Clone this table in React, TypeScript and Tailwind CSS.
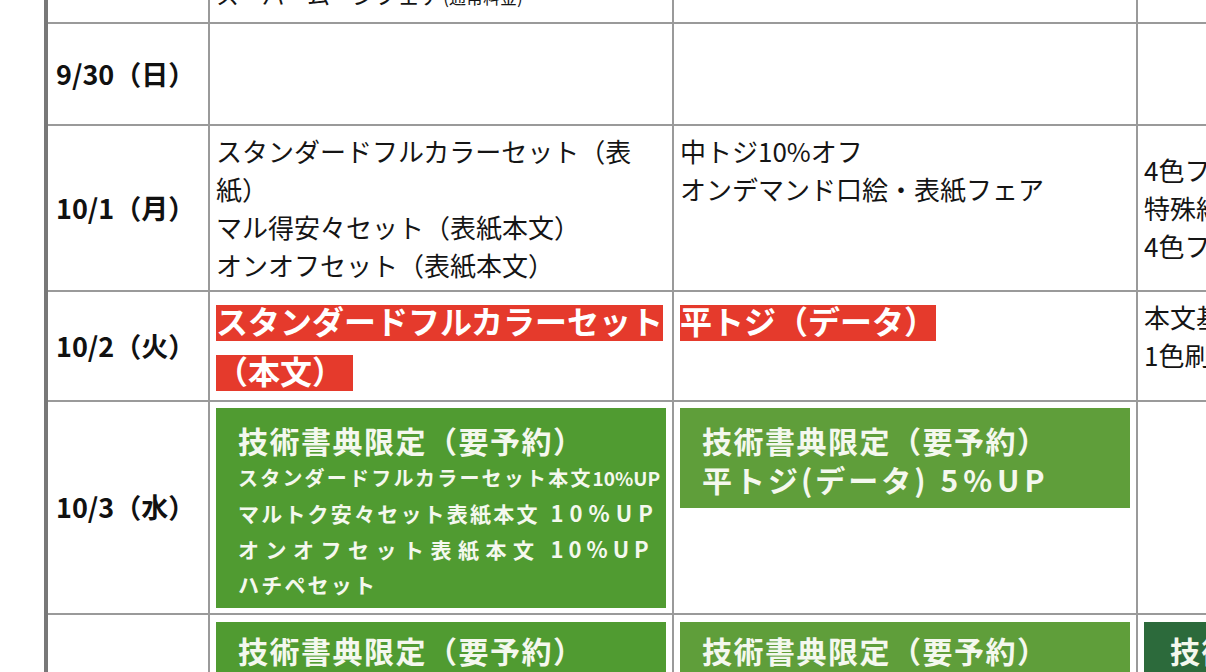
import React from "react";

const Cell = ({ className = "", children }: { className?: string; children?: React.ReactNode }) => (
  <div className={"bg-white " + className}>{children}</div>
);

const DateCell = ({ label, className = "" }: { label: string; className?: string }) => (
  <div className={"bg-white flex items-center pl-[8px] text-[27px] font-bold text-[#111] " + className}>
    <span>{label}</span>
  </div>
);

const Red = ({ children }: { children: React.ReactNode }) => (
  <span className="bg-[#e53a2c] text-white font-bold font-['Liberation_Sans','Noto_Sans_CJK_JP',sans-serif]">
    {children}
  </span>
);

export default function App() {
  return (
    <div className="w-[1206px] h-[672px] overflow-hidden bg-white pl-[44px] font-['Noto_Sans_CJK_JP',sans-serif] text-[#151515]">
      <div className="-mt-[31px] grid w-[1556px] grid-cols-[160px_462px_462px_462px] gap-[2px] bg-[#9a9a9a] border-l-4 border-[#787878]">
        {/* row 0 (cut off) */}
        <Cell />
        <Cell className="p-[6px] text-[23px] leading-[38px] whitespace-nowrap">
          スーパームーンフェア<span className="text-[17px]">(通常料金)</span>
        </Cell>
        <Cell />
        <Cell />

        {/* 9/30 */}
        <DateCell label="9/30（日）" className="h-[100px]" />
        <Cell />
        <Cell />
        <Cell />

        {/* 10/1 */}
        <DateCell label="10/1（月）" />
        <Cell className="p-[6px] text-[26px] leading-[38px]">
          <div>スタンダードフルカラーセット（表紙）</div>
          <div>マル得安々セット（表紙本文）</div>
          <div>オンオフセット（表紙本文）</div>
        </Cell>
        <Cell className="p-[6px] text-[26px] leading-[38px]">
          <div>中トジ10%オフ</div>
          <div>オンデマンド口絵・表紙フェア</div>
        </Cell>
        <Cell className="p-[6px] text-[26px] leading-[38px] flex flex-col justify-center whitespace-nowrap">
          <div>4色フルカラー本文セット</div>
          <div>特殊紙表紙フェア</div>
          <div>4色フルカラー表紙</div>
        </Cell>

        {/* 10/2 */}
        <DateCell label="10/2（火）" />
        <Cell className="pt-[6px] pb-[2px] px-[6px]">
          <div className="text-[32px] leading-[50px] font-['Liberation_Sans','Noto_Sans_CJK_JP',sans-serif]">
            <Red>スタンダードフルカラーセット（本文）{"\u00a0"}</Red>
          </div>
        </Cell>
        <Cell className="pt-[6px] pb-[2px] px-[6px]">
          <div className="text-[32px] leading-[50px] font-['Liberation_Sans','Noto_Sans_CJK_JP',sans-serif]">
            <Red>平トジ（データ）</Red>
          </div>
        </Cell>
        <Cell className="p-[6px] text-[26px] leading-[38px] whitespace-nowrap">
          <div>本文基本セット</div>
          <div>1色刷り表紙</div>
        </Cell>

        {/* 10/3 */}
        <DateCell label="10/3（水）" />
        <Cell className="pt-[6px] pb-[5px] px-[6px]">
          <div className="h-[200px] w-[450px] bg-[#509b31] pl-[22px] pt-[12px] text-[#f4f8ee] font-semibold whitespace-nowrap">
            <div className="text-[30px] leading-[40px] tracking-[1.5px]">技術書典限定（要予約）</div>
            <div className="text-[20px] leading-[35px] tracking-[2.2px]">
              スタンダードフルカラーセット本文<span className="text-[19px] tracking-[0px]">10%UP</span>
            </div>
            <div className="text-[21px] leading-[35px] tracking-[2.2px]">
              マルトク安々セット表紙本文<span className="text-[22px] tracking-[6px]"> 10%UP</span>
            </div>
            <div className="text-[21px] leading-[35px] tracking-[6.5px]">
              オンオフセット表紙本文<span className="text-[22px] tracking-[5px]"> 10%UP</span>
            </div>
            <div className="text-[21px] leading-[35px] tracking-[2.2px]">ハチペセット</div>
          </div>
        </Cell>
        <Cell className="pt-[6px] px-[6px]">
          <div className="h-[100px] w-[450px] bg-[#5f9e3a] pl-[22px] pt-[12px] text-[#f4f8ee] font-semibold whitespace-nowrap">
            <div className="text-[30px] leading-[40px] tracking-[1.5px]">技術書典限定（要予約）</div>
            <div className="text-[30px] leading-[38px] tracking-[3px]">
              平トジ(データ)<span className="tracking-[5px]"> 5%UP</span>
            </div>
          </div>
        </Cell>
        <Cell />

        {/* 10/4 */}
        <DateCell label="10/4（木）" />
        <Cell className="pt-[7px] pb-[5px] px-[6px]">
          <div className="h-[200px] w-[450px] bg-[#509b31] pl-[22px] pt-[8px] text-[#f4f8ee] font-semibold whitespace-nowrap">
            <div className="text-[30px] leading-[40px] tracking-[1.5px]">技術書典限定（要予約）</div>
            <div className="text-[20px] leading-[35px] tracking-[2.2px]">オンオフセット表紙本文 10%UP</div>
          </div>
        </Cell>
        <Cell className="pt-[7px] px-[6px]">
          <div className="h-[100px] w-[450px] bg-[#5f9e3a] pl-[22px] pt-[8px] text-[#f4f8ee] font-semibold whitespace-nowrap">
            <div className="text-[30px] leading-[40px] tracking-[1.5px]">技術書典限定（要予約）</div>
            <div className="text-[30px] leading-[38px] tracking-[3px]">中トジ 5%UP</div>
          </div>
        </Cell>
        <Cell className="pt-[7px] px-[6px]">
          <div className="h-[100px] w-[450px] bg-[#2c6a3b] pl-[26px] pt-[8px] text-[#f4f8ee] font-semibold whitespace-nowrap">
            <div className="text-[30px] leading-[40px] tracking-[1.5px]">技術書典限定（要予約）</div>
          </div>
        </Cell>
      </div>
    </div>
  );
}
